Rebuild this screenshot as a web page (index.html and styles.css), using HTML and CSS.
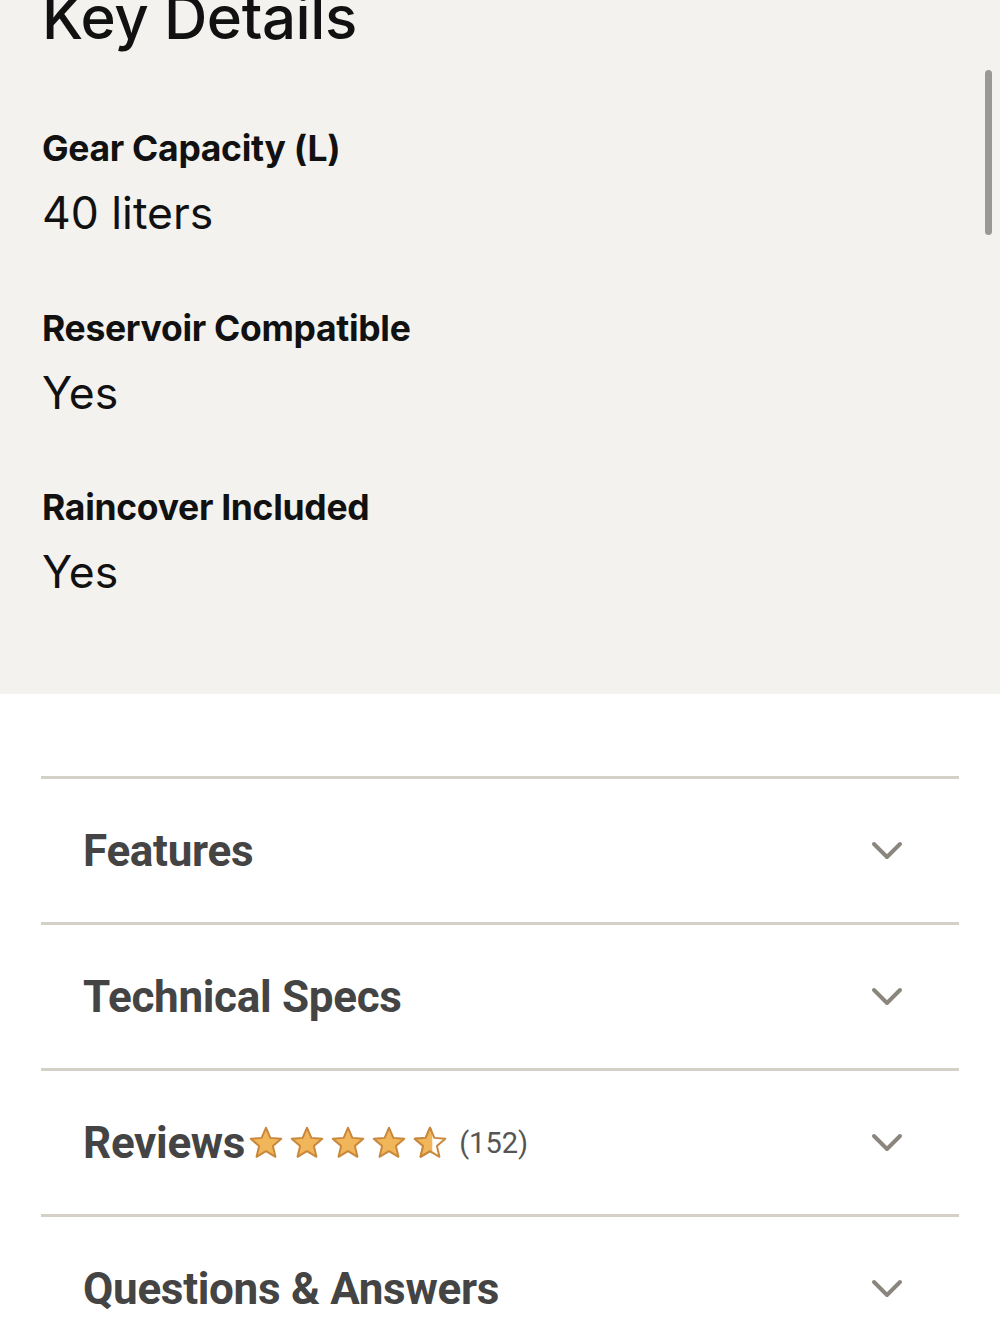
FILE: index.html
```html
<!DOCTYPE html>
<html lang="en">
<head>
  <meta charset="UTF-8">
  <meta name="viewport" content="width=device-width, initial-scale=1.0">
  <title>Key Details</title>
  <link rel="stylesheet" href="styles.css">
</head>
<body>
  <section class="details">
    <h1>Key Details</h1>
    <dl class="detail-list">
      <div class="detail">
        <dt>Gear Capacity (L)</dt>
        <dd>40 liters</dd>
      </div>
      <div class="detail">
        <dt>Reservoir Compatible</dt>
        <dd>Yes</dd>
      </div>
      <div class="detail">
        <dt>Raincover Included</dt>
        <dd>Yes</dd>
      </div>
    </dl>
    <div class="scrollbar"></div>
  </section>

  <section class="accordion">
    <div class="acc-row">
      <span class="acc-title">Features</span>
      <svg class="chevron" viewBox="0 0 32 20"><path d="M3 3 L16 16 L29 3"/></svg>
    </div>
    <div class="acc-row">
      <span class="acc-title">Technical Specs</span>
      <svg class="chevron" viewBox="0 0 32 20"><path d="M3 3 L16 16 L29 3"/></svg>
    </div>
    <div class="acc-row">
      <span class="acc-title">Reviews</span>
      <span class="stars">
        <svg viewBox="0 0 24 24"><path class="star" d="M12 1.8 L14.9 8.6 L22.2 9.2 L16.6 14 L18.3 21.2 L12 17.4 L5.7 21.2 L7.4 14 L1.8 9.2 L9.1 8.6 Z"/></svg>
        <svg viewBox="0 0 24 24"><path class="star" d="M12 1.8 L14.9 8.6 L22.2 9.2 L16.6 14 L18.3 21.2 L12 17.4 L5.7 21.2 L7.4 14 L1.8 9.2 L9.1 8.6 Z"/></svg>
        <svg viewBox="0 0 24 24"><path class="star" d="M12 1.8 L14.9 8.6 L22.2 9.2 L16.6 14 L18.3 21.2 L12 17.4 L5.7 21.2 L7.4 14 L1.8 9.2 L9.1 8.6 Z"/></svg>
        <svg viewBox="0 0 24 24"><path class="star" d="M12 1.8 L14.9 8.6 L22.2 9.2 L16.6 14 L18.3 21.2 L12 17.4 L5.7 21.2 L7.4 14 L1.8 9.2 L9.1 8.6 Z"/></svg>
        <svg viewBox="0 0 24 24">
          <defs>
            <clipPath id="half"><rect x="0" y="0" width="13.5" height="24"/></clipPath>
          </defs>
          <path class="star-empty" d="M12 1.8 L14.9 8.6 L22.2 9.2 L16.6 14 L18.3 21.2 L12 17.4 L5.7 21.2 L7.4 14 L1.8 9.2 L9.1 8.6 Z"/>
          <path class="star" clip-path="url(#half)" d="M12 1.8 L14.9 8.6 L22.2 9.2 L16.6 14 L18.3 21.2 L12 17.4 L5.7 21.2 L7.4 14 L1.8 9.2 L9.1 8.6 Z"/>
        </svg>
        <span class="count">(152)</span>
      </span>
      <svg class="chevron" viewBox="0 0 32 20"><path d="M3 3 L16 16 L29 3"/></svg>
    </div>
    <div class="acc-row">
      <span class="acc-title">Questions &amp; Answers</span>
      <svg class="chevron" viewBox="0 0 32 20"><path d="M3 3 L16 16 L29 3"/></svg>
    </div>
  </section>
</body>
</html>
```

FILE: styles.css
```css
body {
  margin: 0;
  font-family: Inter, "Liberation Sans", sans-serif;
  color: #111;
  background: #fff;
  overflow: hidden;
}
.details {
  display: flow-root;
  position: relative;
  background: #f3f2ee;
  padding: 0 42px;
  height: 694px;
  box-sizing: border-box;
}
h1 {
  margin: -15px 0 0;
  font-size: 60px;
  font-weight: 500;
  line-height: 64px;
  letter-spacing: -0.4px;
}
.detail-list {
  margin: 0;
  padding-top: 79px;
}
.detail {
  height: 179.5px;
}
dt {
  font-size: 35.5px;
  font-weight: 700;
  line-height: 42px;
  letter-spacing: -0.3px;
}
dd {
  margin: 17px 0 0;
  font-size: 44.5px;
  font-weight: 400;
  line-height: 52px;
}
.scrollbar {
  position: absolute;
  right: 8px;
  top: 70px;
  width: 7px;
  height: 165px;
  border-radius: 4px;
  background: #9b9995;
}
.accordion {
  padding: 82px 41px 0;
}
.acc-row {
  display: flex;
  align-items: center;
  height: 143px;
  border-top: 3px solid #d4d0c8;
  padding: 0 56px 0 42px;
}
.acc-title {
  font-family: Roboto, "Liberation Sans", sans-serif;
  font-size: 44px;
  font-weight: 700;
  color: #444;
  letter-spacing: -0.3px;
}
.chevron {
  margin-left: auto;
  width: 32px;
  height: 20px;
  fill: none;
  stroke: #8a867e;
  stroke-width: 4;
  stroke-linecap: round;
  stroke-linejoin: round;
}
.stars {
  display: flex;
  align-items: center;
  gap: 5px;
  margin-left: 3px;
}
.stars svg {
  width: 36px;
  height: 36px;
}
.star {
  fill: #f2b65a;
  stroke: #c8873a;
  stroke-width: 1.3;
  stroke-linejoin: round;
}
.star-empty {
  fill: #fff;
  stroke: #c8873a;
  stroke-width: 1.3;
  stroke-linejoin: round;
}
.count {
  margin-left: 6px;
  font-family: Roboto, "Liberation Sans", sans-serif;
  font-size: 29px;
  color: #555;
}
```
